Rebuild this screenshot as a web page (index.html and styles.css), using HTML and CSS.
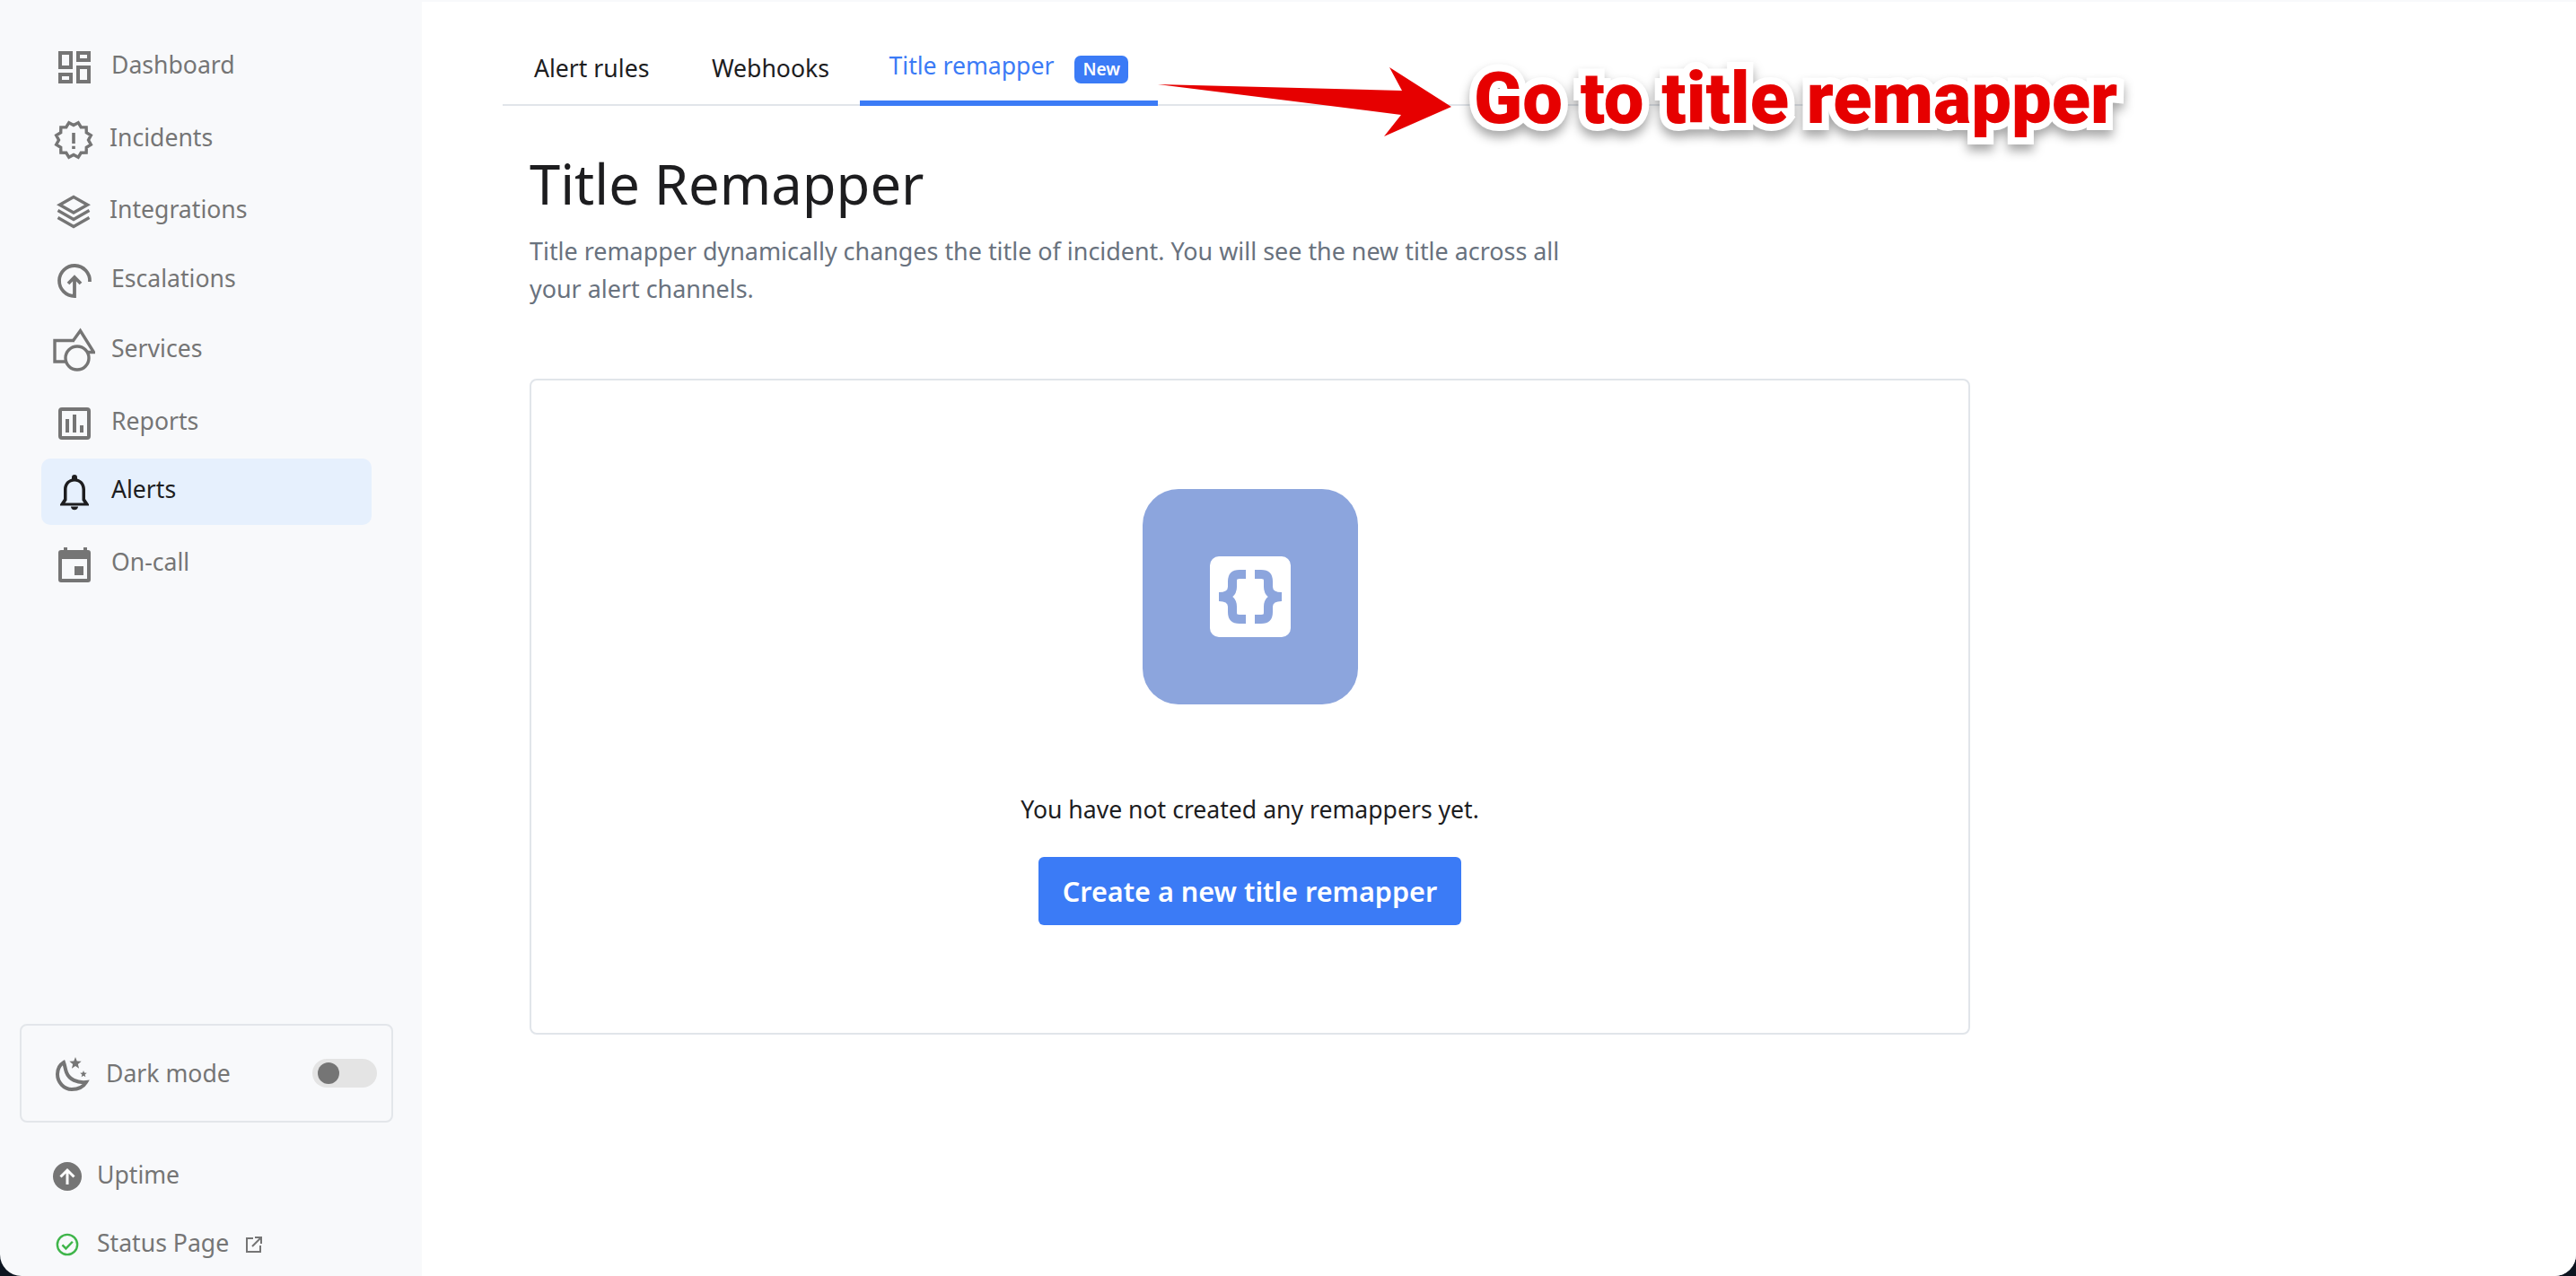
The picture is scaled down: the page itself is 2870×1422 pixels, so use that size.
FILE: index.html
```html
<!DOCTYPE html>
<html lang="en">
<head>
    <meta charset="UTF-8">
    <meta name="viewport" content="width=device-width, initial-scale=1.0">
    <title>Title Remapper</title>
    <link rel="stylesheet" href="styles.css">
</head>
<body>
    <div class="window">
        <aside class="sidebar">
            <nav class="nav">
                <a class="nav-item">
                    <svg class="nav-icon" viewBox="0 0 60 60" fill="none" stroke="#757575" stroke-width="4"><path d="M21 14h12v16H21zM41 14h12v8H41zM21 38h12v8H21zM41 30h12v16H41z"/></svg>
                    <span class="nav-label">Dashboard</span>
                </a>
                <a class="nav-item nav-item-shift">
                    <svg class="nav-icon" viewBox="0 0 60 60" fill="none" stroke="#757575" stroke-width="3.4"><polygon points="36,13.5 41.18,10.68 44.25,15.71 50.14,15.86 50.29,21.75 55.32,24.82 52.5,30 55.32,35.18 50.29,38.25 50.14,44.14 44.25,44.29 41.18,49.32 36,46.5 30.82,49.32 27.75,44.29 21.86,44.14 21.71,38.25 16.68,35.18 19.5,30 16.68,24.82 21.71,21.75 21.86,15.86 27.75,15.71 30.82,10.68"/><path d="M36 22v12M36 36.700v3.300" stroke-width="3.600"/></svg>
                    <span class="nav-label">Incidents</span>
                </a>
                <a class="nav-item nav-item-shift">
                    <svg class="nav-icon" viewBox="0 0 60 60" fill="none" stroke="#757575" stroke-width="3.4"><path d="M36 13.500l15.500 8.700L36 31l-15.500-8.800z"/><path d="M18.500 28.500L36 38.500l17.500-10M18.500 36.500L36 46.500l17.500-10"/></svg>
                    <span class="nav-label">Integrations</span>
                </a>
                <a class="nav-item">
                    <svg class="nav-icon" viewBox="0 0 60 60" fill="none" stroke="#757575" stroke-width="3.800"><path d="M54 31A17 17 0 1 0 37 47V26M30 33l7-7 7 7"/></svg>
                    <span class="nav-label">Escalations</span>
                </a>
                <a class="nav-item">
                    <svg class="nav-icon" viewBox="0 0 60 60" fill="none" stroke="#757575" stroke-width="3.4"><path d="M27 42H15V18.500h22"/><path d="M36 18l7.500-10.500L58.500 31.500h-7"/><circle cx="40" cy="38" r="13"/></svg>
                    <span class="nav-label">Services</span>
                </a>
                <a class="nav-item">
                    <svg class="nav-icon" viewBox="0 0 60 60" fill="none" stroke="#757575" stroke-width="4"><rect x="21" y="14" width="32" height="32" rx="2"/><path d="M29 40V25M37 40V20M45 40v-8"/></svg>
                    <span class="nav-label">Reports</span>
                </a>
                <a class="nav-item nav-item-active">
                    <svg class="nav-icon" viewBox="0 0 60 60"><path fill="#1d1d1f" fill-rule="evenodd" d="M37 11a3 3 0 0 1 3 3v1.500c5.500 1.500 9 6 9 12V38l4 6v1.500H21V44l4-6V27.500c0-6 3.500-10.500 9-12V14a3 3 0 0 1 3-3zM37 18.500c-5.500 0-8.500 4-8.500 9.500v11.500l-2 3h21l-2-3V28c0-5.500-3-9.500-8.500-9.500zM33 46.500h8c0 2.300-1.800 3.700-4 3.700s-4-1.400-4-3.700z"/></svg>
                    <span class="nav-label">Alerts</span>
                </a>
                <a class="nav-item">
                    <svg class="nav-icon" viewBox="0 0 60 60"><path fill="#757575" fill-rule="evenodd" d="M25 11h4v3h18v-3h4v3h1a3 3 0 0 1 3 3v30a3 3 0 0 1-3 3H22a3 3 0 0 1-3-3V17a3 3 0 0 1 3-3h3zM23 24v22h28V24z"/><rect fill="#757575" x="37" y="32" width="10" height="10"/></svg>
                    <span class="nav-label">On-call</span>
                </a>
            </nav>
            <div class="sidebar-bottom">
                <div class="dark-box">
                    <svg class="moon-icon" viewBox="0 0 38 42"><path fill="none" stroke="#757575" stroke-width="4" d="M9 9C4 12 2 17 2 22c0 9 7 17 16 17 7 0 13-3 16-8-10 1-19-3-22-11-1.500-4-1.500-7-3-11z"/><polygon fill="#757575" points="22,3 23.76,7.57 28.66,7.84 24.85,10.93 26.11,15.66 22,13 17.89,15.66 19.15,10.93 15.34,7.84 20.24,7.57"/><polygon fill="#757575" points="31,18 32,20.6 34.8,20.76 32.62,22.52 33.35,25.24 31,23.7 28.65,25.24 29.38,22.52 27.2,20.76 30,20.6"/></svg>
                    <span class="dark-label">Dark mode</span>
                    <span class="toggle"><span class="toggle-knob"></span></span>
                </div>
                <a class="foot-link foot-uptime">
                    <svg class="uptime-icon" viewBox="0 0 32 32"><circle cx="16" cy="16" r="16" fill="#757575"/><path fill="none" stroke="#fff" stroke-width="3" d="M16 25V9M8.500 16.500L16 9l7.500 7.500"/></svg>
                    <span class="foot-label">Uptime</span>
                </a>
                <a class="foot-link foot-status">
                    <svg class="status-icon" viewBox="0 0 28 28" fill="none" stroke="#3fb54a" stroke-width="2.600"><circle cx="14" cy="14" r="12"/><path d="M8 14.500l4.300 4.300 8-8.300"/></svg>
                    <span class="foot-label">Status Page</span>
                    <svg class="ext-icon" viewBox="0 0 18 18" fill="none" stroke="#757575" stroke-width="2"><path d="M8 2H1v15h15v-7M7 11L17 1M10 1h7v7"/></svg>
                </a>
            </div>
        </aside>

        <main class="main">
            <div class="tabs">
                <a class="tab">Alert rules</a>
                <a class="tab">Webhooks</a>
                <a class="tab tab-active">Title remapper <span class="badge">New</span></a>
            </div>

            <div class="content">
                <h1>Title Remapper</h1>
                <p class="subtitle">Title remapper dynamically changes the title of incident. You will see the new title across all your alert channels.</p>

                <div class="card">
                    <div class="tile">
                        <svg class="tile-icon" viewBox="0 0 90 90"><rect width="90" height="90" rx="10" fill="#fff"/><path fill="none" stroke="#8ca5dd" stroke-width="10" d="M40 20h-7c-6 0-8 3-8 8v6c0 6-4 11-15 11 11 0 15 5 15 11v6c0 5 2 8 8 8h7M50 20h7c6 0 8 3 8 8v6c0 6 4 11 15 11-11 0-15 5-15 11v6c0 5-2 8-8 8h-7"/></svg>
                    </div>
                    <p class="empty-text">You have not created any remappers yet.</p>
                    <button class="btn" type="button">Create a new title remapper</button>
                </div>
            </div>
        </main>

        <svg class="arrow" viewBox="0 0 340 90"><polygon fill="#e60000" points="0,19 272,26 258,0 327,44 252,77 271,53"/></svg>
        <div class="callout">Go to title remapper</div>
    </div>
</body>
</html>
```

FILE: styles.css
```css
* {
    box-sizing: border-box;
}

html, body {
    height: 100%;
}

body {
    margin: 0;
    background-color: #0d1520;
    font-family: "Noto Sans", Arial, sans-serif;
    overflow: hidden;
}

.window {
    position: relative;
    display: flex;
    height: 1422px;
    background-color: #f8f9fb;
    border-radius: 0 0 24px 24px;
    overflow: hidden;
}

/* sidebar */
.sidebar {
    width: 470px;
    flex-shrink: 0;
    display: flex;
    flex-direction: column;
    justify-content: space-between;
    padding: 38px 0 0 46px;
}

.nav {
    width: 368px;
}

.nav-item {
    display: flex;
    align-items: center;
    height: 74px;
    margin-bottom: 7px;
    border-radius: 10px;
    color: #757575;
    font-size: 26.6px;
}

.nav-item:nth-child(2) { margin-bottom: 6px; }
.nav-item:nth-child(3) { margin-bottom: 3px; }
.nav-item:nth-child(4) { margin-bottom: 4px; }
.nav-item:nth-child(6) { margin-bottom: 2px; }

.nav-icon {
    width: 60px;
    height: 60px;
    flex-shrink: 0;
    margin-right: 18px;
}

.nav-label {
    padding-bottom: 6px;
}

.nav-item-shift .nav-label {
    margin-left: -2px;
}

.nav-item-active {
    background-color: #e6f0fd;
    color: #1d1d1f;
}

.sidebar-bottom {
    margin-left: -24px;
}

.dark-box {
    display: flex;
    align-items: center;
    width: 416px;
    height: 110px;
    padding: 0 16px 0 38px;
    border: 2px solid #e3e6ea;
    border-radius: 8px;
    color: #757575;
    font-size: 26.6px;
}

.moon-icon {
    width: 38px;
    height: 42px;
    margin-right: 18px;
}

.dark-label {
    flex: 1;
    padding-bottom: 1px;
}

.toggle {
    display: block;
    width: 72px;
    height: 32px;
    padding: 4px 6px;
    border-radius: 16px;
    background-color: #e4e4e4;
}

.toggle-knob {
    display: block;
    width: 24px;
    height: 24px;
    border-radius: 50%;
    background-color: #757575;
}

.foot-link {
    display: flex;
    align-items: center;
    color: #757575;
    font-size: 26.6px;
}

.foot-uptime {
    height: 32px;
    margin-top: 44px;
    padding-left: 37px;
}

.foot-status {
    height: 26px;
    margin-top: 47px;
    margin-bottom: 22px;
    padding-left: 40px;
}

.foot-label {
    padding-bottom: 5px;
}

.uptime-icon {
    width: 32px;
    height: 32px;
    margin-right: 17px;
}

.status-icon {
    width: 26px;
    height: 26px;
    margin-right: 20px;
}

.ext-icon {
    width: 18px;
    height: 18px;
    margin-left: 19px;
}

/* main */
.main {
    flex: 1;
    margin-top: 2px;
    padding: 0 0 0 90px;
    background-color: #ffffff;
}

.tabs {
    display: flex;
    width: 1640px;
    height: 116px;
    padding-top: 40px;
    border-bottom: 2px solid #e1e5ea;
}

.tab {
    display: block;
    height: 74px;
    padding: 16px 34.500px 0 35px;
    color: #1d1d1f;
    font-size: 26.6px;
}

.tab-active {
    display: flex;
    align-items: flex-start;
    width: 332px;
    height: 76px;
    padding: 13px 0 0 32px;
    border-bottom: 6px solid #3b7bf6;
    color: #3b7bf6;
}

.badge {
    margin-left: 23px;
    margin-top: 7px;
    padding: 0 9px;
    height: 31px;
    line-height: 30px;
    border-radius: 7px;
    background-color: #3b7bf6;
    color: #ffffff;
    font-size: 19px;
    font-weight: 600;
}

.content {
    padding-left: 30px;
}

h1 {
    margin: 47px 0 0;
    color: #1d1d1f;
    font-size: 61.500px;
    font-weight: 400;
    line-height: 78px;
}

.subtitle {
    width: 1165px;
    margin: 16px 0 0;
    color: #69727e;
    font-size: 26.900px;
    line-height: 42px;
}

.card {
    display: flex;
    flex-direction: column;
    align-items: center;
    width: 1605px;
    height: 731px;
    margin-top: 79px;
    padding-top: 121px;
    border: 2px solid #e1e5ea;
    border-radius: 8px;
}

.tile {
    display: flex;
    align-items: center;
    justify-content: center;
    width: 240px;
    height: 240px;
    border-radius: 40px;
    background-color: #8ca5dd;
}

.tile-icon {
    width: 90px;
    height: 90px;
}

.empty-text {
    margin: 97px 0 0;
    color: #1d1d1f;
    font-size: 26.6px;
    line-height: 40px;
}

.btn {
    width: 471px;
    height: 76px;
    margin-top: 33px;
    border: none;
    border-radius: 6px;
    background-color: #3b7bf6;
    color: #ffffff;
    font-family: inherit;
    font-size: 30.600px;
    font-weight: 600;
}

/* annotation on top of the screenshot */
.arrow {
    position: absolute;
    left: 1290px;
    top: 75px;
    width: 340px;
    height: 90px;
}

.callout {
    position: absolute;
    left: 1642px;
    top: 62px;
    color: #e60000;
    font-family: Roboto, Arial, sans-serif;
    font-size: 79.500px;
    font-weight: 900;
    line-height: 96px;
    white-space: nowrap;
    -webkit-text-stroke: 16px #ffffff;
    paint-order: stroke fill;
    filter: drop-shadow(0 7px 6px rgba(0, 0, 0, 0.35));
}
```
